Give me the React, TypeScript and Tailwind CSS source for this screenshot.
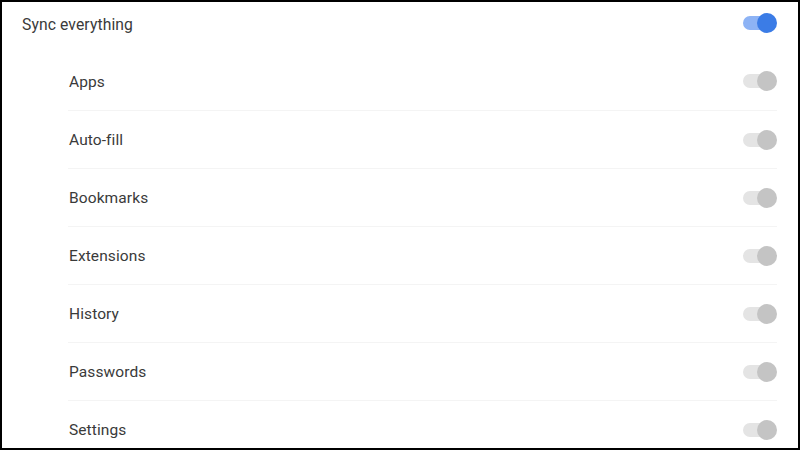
import React from "react";

function Toggle({ on }: { on: boolean }) {
  return (
    <div className="relative w-[36px] h-[20px] flex items-center shrink-0">
      <div
        className={
          "absolute left-[2px] w-[30px] h-[14px] rounded-full " +
          (on ? "bg-[#8db3f5]" : "bg-[#e4e4e4]")
        }
      />
      <div
        className={
          "absolute right-[0px] w-[20px] h-[20px] rounded-full " +
          (on ? "bg-[#3b7ce6]" : "bg-[#c4c4c4]")
        }
      />
    </div>
  );
}

const items = ["Apps", "Auto-fill", "Bookmarks", "Extensions", "History", "Passwords", "Settings"];

export default function App() {
  return (
    <div
      className="w-[800px] h-[450px] bg-white border-2 border-black overflow-hidden text-[#3a3a3a]"
      style={{ fontFamily: "Roboto, 'Liberation Sans', sans-serif" }}
    >
      <div className="h-[42px] flex items-center justify-between pl-[20px] pr-[21px]">
        <span className="text-[15.7px] tracking-[0.1px] pt-[3px]">Sync everything</span>
        <Toggle on />
      </div>
      <div className="h-[8px]" />
      <div className="pl-[66px] pr-[21px]">
        {items.map((it, i) => (
          <div
            key={it}
            className={
              "h-[58px] flex items-center justify-between " +
              (i > 0 ? "border-t border-[#f4f4f4]" : "")
            }
          >
            <span className="text-[15.5px] pl-[1px] pt-[3px] tracking-[0.1px]">{it}</span>
            <Toggle on={false} />
          </div>
        ))}
      </div>
    </div>
  );
}
